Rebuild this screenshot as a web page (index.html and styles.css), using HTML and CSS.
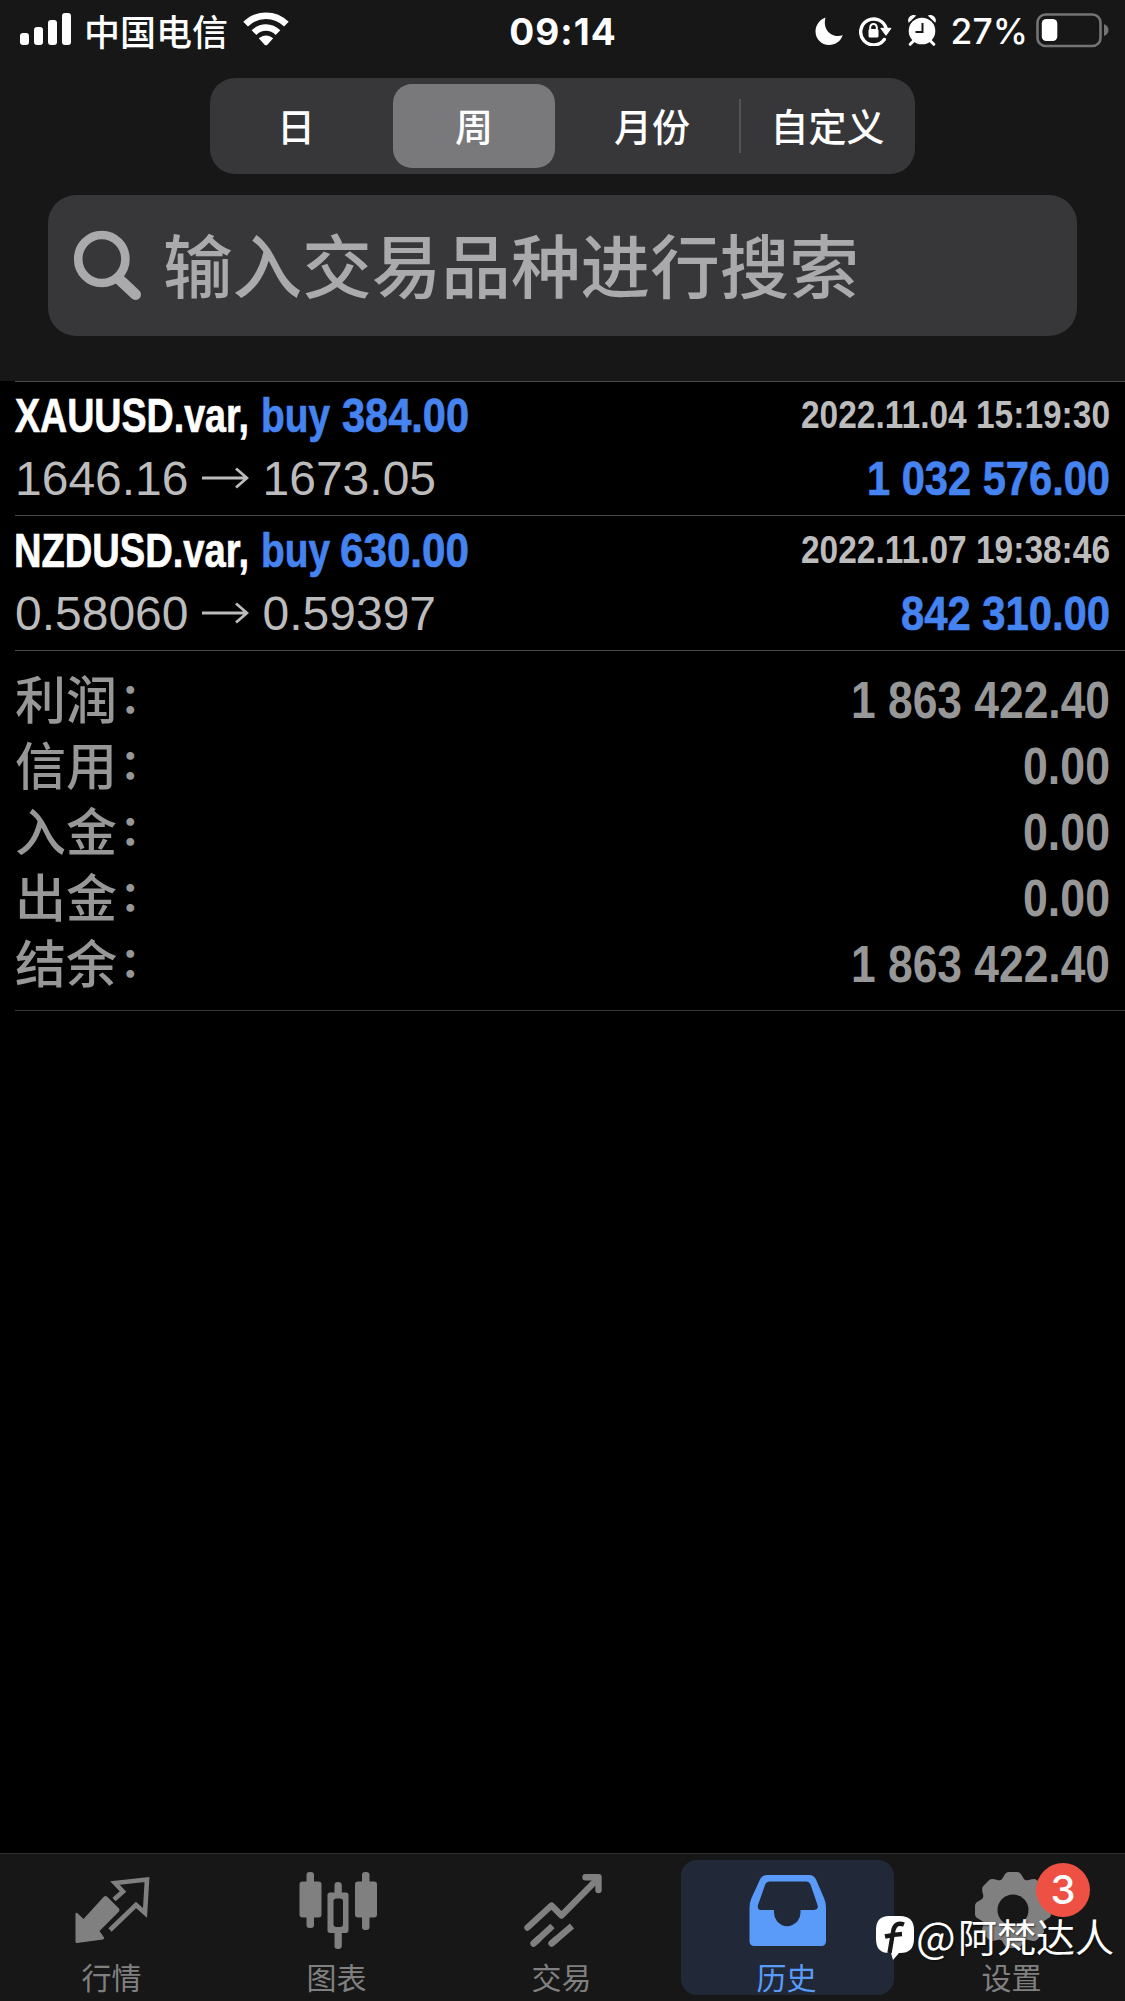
FILE: index.html
```html
<!DOCTYPE html>
<html lang="zh-CN">
<head>
<meta charset="utf-8">
<title>历史</title>
<link rel="stylesheet" href="styles.css">
</head>
<body>
<header class="top">
  <div class="status">
    <div class="status-left">
      <svg class="signal" width="52" height="33" viewBox="0 0 52 33" fill="#fff"><rect x="0" y="20" width="9" height="12" rx="3"/><rect x="14" y="14" width="9" height="18" rx="3"/><rect x="28" y="7" width="9" height="25" rx="3"/><rect x="42" y="0" width="9" height="32" rx="3"/></svg>
      <span class="carrier">中国电信</span>
      <svg class="wifi" width="46" height="34" viewBox="0 0 46 34"><g fill="none" stroke="#fff" stroke-width="6.6"><path d="M2.6 12.2C14 .9 32 .9 43.4 12.2"/><path d="M11 20.6c6.900-6.800 17.100-6.800 24 0"/></g><path d="M15.800 26.300c4.200-3.900 10.200-3.900 14.400 0l-5.800 6.400q-1.400 1.300-2.800 0z" fill="#fff"/></svg>
    </div>
    <time class="clock">09:14</time>
    <div class="status-right">
      <svg class="moon" width="28" height="29" viewBox="0 0 28 29"><path d="M10.500.500C5 2.500.5 8 .5 14.500.5 22 6.500 28 14 28c6.500 0 11.800-4 13.700-9.800C18 21.500 7 14 10.500.5z" fill="#fff"/></svg>
      <svg class="lock" width="33" height="30" viewBox="0 0 33 30"><path d="M25.300 23.500A13 13 0 1 1 27.200 12.500" fill="none" stroke="#fff" stroke-width="3.400" stroke-linecap="round"/><path d="M21.800 12.300H32L27 19.300z" fill="#fff" stroke="#fff" stroke-linejoin="round"/><rect x="9.500" y="13" width="10" height="8.500" rx="1.500" fill="#fff"/><path d="M11.200 14v-2.500a3.300 3.600 0 0 1 6.600 0V14" fill="none" stroke="#fff" stroke-width="2"/></svg>
      <svg class="alarm" width="30" height="32" viewBox="0 0 30 32"><g fill="#fff"><circle cx="15" cy="17" r="13.300"/><path d="M1.700 8.800C-.5 4 4.500-.7 9.300 1.600zM28.300 8.800C30.500 4 25.500-.7 20.700 1.600z"/></g><path d="M6.500 27l-3.300 3.300M23.500 27l3.300 3.300" stroke="#fff" stroke-width="3" stroke-linecap="round"/><path d="M15.500 9v9H8.500" fill="none" stroke="#171717" stroke-width="2"/></svg>
      <span class="percent">27%</span>
      <svg class="battery" width="74" height="36" viewBox="0 0 74 36"><rect x="1.500" y="1.500" width="63" height="31.500" rx="8" fill="none" stroke="#747474" stroke-width="2.600"/><rect x="5.800" y="6" width="15.500" height="22" rx="4.500" fill="#fff"/><path d="M68 11v12q4.500-2 4.500-6T68 11z" fill="#747474"/></svg>
    </div>
  </div>
  <nav class="segments">
    <span class="segment">日</span>
    <span class="segment active">周</span>
    <span class="segment month">月份</span>
    <i class="rule"></i>
    <span class="segment wide">自定义</span>
  </nav>
  <div class="search">
    <svg width="70" height="72" viewBox="0 0 70 72" fill="none" stroke="#aaaaac"><ellipse cx="28.800" cy="29" rx="23.600" ry="24" stroke-width="8.600"/><path d="M46 49L62.500 64.500" stroke-width="11" stroke-linecap="round"/></svg>
    <span>输入交易品种进行搜索</span>
  </div>
</header>

<main class="history">
  <article class="deal first">
    <div class="line">
      <svg class="narrow title" width="460" height="62"><text x="0" y="49" textLength="234" lengthAdjust="spacingAndGlyphs">XAUUSD.var,</text><text class="blue" x="246" y="49" textLength="69" lengthAdjust="spacingAndGlyphs">buy</text><text class="blue" x="327" y="49" textLength="127" lengthAdjust="spacingAndGlyphs">384.00</text></svg>
      <svg class="narrow date" width="311" height="62"><text x="1" y="45" textLength="309" lengthAdjust="spacingAndGlyphs">2022.11.04 15:19:30</text></svg>
    </div>
    <div class="line">
      <div class="prices"><span>1646.16</span><svg width="48" height="24" viewBox="0 0 48 24"><path d="M1 12H46M35 2.500L46 12 35 21.500"/></svg><span>1673.05</span></div>
      <svg class="narrow title blue" width="246" height="62"><text x="2" y="50" textLength="243" lengthAdjust="spacingAndGlyphs">1 032 576.00</text></svg>
    </div>
  </article>
  <article class="deal">
    <div class="line">
      <svg class="narrow title" width="460" height="62"><text x="-1" y="49" textLength="235" lengthAdjust="spacingAndGlyphs">NZDUSD.var,</text><text class="blue" x="246" y="49" textLength="69" lengthAdjust="spacingAndGlyphs">buy</text><text class="blue" x="325" y="49" textLength="129" lengthAdjust="spacingAndGlyphs">630.00</text></svg>
      <svg class="narrow date" width="311" height="62"><text x="1" y="45" textLength="309" lengthAdjust="spacingAndGlyphs">2022.11.07 19:38:46</text></svg>
    </div>
    <div class="line">
      <div class="prices"><span>0.58060</span><svg width="48" height="24" viewBox="0 0 48 24"><path d="M1 12H46M35 2.500L46 12 35 21.500"/></svg><span>0.59397</span></div>
      <svg class="narrow title blue" width="212" height="62"><text x="2" y="50" textLength="209" lengthAdjust="spacingAndGlyphs">842 310.00</text></svg>
    </div>
  </article>
  <section class="summary">
    <div class="total"><span class="label">利润<b>：</b></span><svg class="narrow" width="261" height="66"><text x="1" y="52" textLength="259" lengthAdjust="spacingAndGlyphs">1 863 422.40</text></svg></div>
    <div class="total"><span class="label">信用<b>：</b></span><svg class="narrow" width="89" height="66"><text x="1" y="52" textLength="87" lengthAdjust="spacingAndGlyphs">0.00</text></svg></div>
    <div class="total"><span class="label">入金<b>：</b></span><svg class="narrow" width="89" height="66"><text x="1" y="52" textLength="87" lengthAdjust="spacingAndGlyphs">0.00</text></svg></div>
    <div class="total"><span class="label">出金<b>：</b></span><svg class="narrow" width="89" height="66"><text x="1" y="52" textLength="87" lengthAdjust="spacingAndGlyphs">0.00</text></svg></div>
    <div class="total"><span class="label">结余<b>：</b></span><svg class="narrow" width="261" height="66"><text x="1" y="52" textLength="259" lengthAdjust="spacingAndGlyphs">1 863 422.40</text></svg></div>
  </section>
</main>

<nav class="tabs">
  <div class="tab">
    <svg width="90" height="90" viewBox="2.500 0 90 90"><path d="M38.500 30.500q1.500-1 3 0l12 12q1 1.500 0 3L34 65l4.500 6.500q.5 1.500-1 2L11.500 77q-1.500 0-1.500-1.500V48q.3-2 2-.8L18 53z" fill="#808080"/><path d="M48.500 33.500L57.500 25.500 49.500 17 81.500 13.500 79.500 47 70.500 39 44.500 64" fill="none" stroke="#808080" stroke-width="4.600"/></svg>
    <span>行情</span>
  </div>
  <div class="tab">
    <svg width="90" height="90" viewBox="0 0 90 90" fill="#808080"><rect x="6.500" y="15.500" width="22" height="36" rx="3"/><rect x="13.500" y="6" width="7.500" height="56" rx="3"/><rect x="62" y="15.500" width="22" height="36" rx="3"/><rect x="69" y="6" width="7.500" height="58" rx="3"/><path d="M41.500 19q0-3 3.500-3t3.800 3v7.500H53q2.500 0 2.500 2.500v35q0 3-2.500 3h-4.200v13q0 3-3.800 3t-3.500-3V67H37q-2.500 0-2.500-3V29q0-2.500 2.500-2.500h4.500zM40.500 35v23q0 3 3 3h3.500q3 0 3-3V35q0-2.500-3-2.500h-3.500q-3 0-3 2.500z" fill-rule="evenodd"/></svg>
    <span>图表</span>
  </div>
  <div class="tab">
    <svg width="90" height="90" viewBox="0 0 90 90" fill="none" stroke="#808080" stroke-width="6.400" stroke-linecap="round" stroke-linejoin="round"><path d="M9.500 61.500L33.500 39.500 43.500 49.500 78 14.500"/><path d="M67.500 11.200H80.500V24"/><path d="M15.500 77.500L34.500 60M33.500 77.500L54 60" stroke-linecap="butt"/><path d="M15.500 77.500l5-4.500M33.500 77.500l5-4.200"/><path d="M71 9h11v11z" fill="#808080" stroke="none"/></svg>
    <span>交易</span>
  </div>
  <div class="tab current">
    <svg width="90" height="90" viewBox="0 0 90 90"><path d="M24 9H66q5 0 7 4.500L81 32q2 4.500 2 10V75q0 5-5 5H11.500q-5 0-5-5V42q0-5.500 2-10L17 13.500Q19 9 24 9zM27 15.500q-3.500 0-4.800 3L15 39q-1 5 3 5H31v2.500q0 5 3 8.800 4.500 5 10 5t10.500-5q3-3.800 3-8.800V44H71q5-.5 3.500-5L67.500 18.500q-1.300-3-4.500-3z" fill="#5a9bfa" fill-rule="evenodd"/></svg>
    <span>历史</span>
  </div>
  <div class="tab">
    <svg width="90" height="90" viewBox="0 0 90 90"><defs><mask id="hub"><rect width="90" height="90" fill="#fff"/><circle cx="45" cy="44" r="15.500"/></mask></defs><g mask="url(#hub)" fill="#808080"><circle cx="45" cy="44" r="32.500"/><g id="teeth"><path id="tooth" d="M31 18L36.500 9Q38 6 41 6H49Q52 6 53.500 9L59 18z"/><use href="#tooth" transform="rotate(45 45 44)"/><use href="#tooth" transform="rotate(90 45 44)"/><use href="#tooth" transform="rotate(135 45 44)"/></g><use href="#teeth" transform="rotate(180 45 44)"/></g></svg>
    <span>设置</span>
    <em class="badge">3</em>
  </div>
</nav>
<div class="credit">
  <svg width="40" height="46" viewBox="0 0 40 46"><path d="M14 1H25Q39 1 39 15v9q0 14-14 14h-1l-6 7-2-7H14Q1 38 1 24V15Q1 1 14 1z" fill="#fff"/><path d="M29 9.500q-8-3-10.500 5L14.500 38M10 21.500q9-2 17-2.500" fill="none" stroke="#171717" stroke-width="4.400"/></svg>
  <span class="at">@</span><span>阿梵达人</span>
</div>
</body>
</html>
```
FILE: styles.css
```css
* { box-sizing: border-box; }

body {
  margin: 0;
  width: 1125px;
  height: 2001px;
  display: flex;
  flex-direction: column;
  overflow: hidden;
  background: #000;
  color: #fff;
  font-family: Inter, "Noto Sans CJK SC", sans-serif;
}

svg { display: block; flex: none; }

.top {
  height: 381px;
  background: #171717;
}

.status {
  height: 62px;
  display: grid;
  grid-template-columns: 1fr auto 1fr;
  align-items: center;
  padding: 0 15px 0 20px;
}

.status-left,
.status-right {
  display: flex;
  align-items: center;
}

.status-right { justify-content: flex-end; }

.signal { margin-bottom: 3px; }

.carrier {
  margin: 0 0 2px 12px;
  font-size: 36px;
  line-height: 52px;
  font-weight: 500;
  font-family: "Noto Sans CJK SC", sans-serif;
}

.wifi { margin: 0 0 4px 15px; }

.clock {
  margin-right: 4px;
  font-size: 37px;
  font-weight: 700;
  letter-spacing: 1px;
}

.moon { margin-right: 16px; }
.lock { margin: 0 15px 0 0; }
.alarm { margin: 0 14px 3px 0; }

.percent {
  font-size: 35.5px;
  font-weight: 500;
}

.battery { margin-left: 8px; }

.segments {
  width: 705px;
  height: 96px;
  margin: 16px 0 0 210px;
  padding: 6px 0;
  display: flex;
  align-items: center;
  border-radius: 25px;
  background: #373739;
}

.segment {
  flex: none;
  width: 172px;
  height: 84px;
  margin-right: 11px;
  border-radius: 19px;
  text-align: center;
  font: 500 38px/82px "Noto Sans CJK SC", sans-serif;
}

.segment.active {
  width: 162px;
  background: #79797b;
}

.segment.month { margin-right: 1px; }

.segment.wide {
  width: 173px;
  margin-right: 0;
}

.rule {
  width: 2px;
  height: 54px;
  background: #535355;
}

.search {
  width: 1029px;
  height: 141px;
  margin: 21px 0 0 48px;
  padding-left: 25px;
  display: flex;
  align-items: center;
  border-radius: 28px;
  background: #373739;
  color: #aaaaac;
  font: 500 69.6px/135px "Noto Sans CJK SC", sans-serif;
}

.search svg { margin-right: 20px; }
.search span { height: 141px; }

.history { flex: 1; }

.deal,
.summary {
  margin-left: 15px;
  padding-right: 14px;
  border-top: 1px solid #4a4a4a;
}

.deal {
  height: 135px;
  padding-top: 2px;
}

.deal.first {
  height: 134px;
  padding-top: 1px;
}

.summary {
  height: 361px;
  padding-top: 15px;
  border-bottom: 1px solid #3a3a3a;
}

.line {
  height: 62px;
  display: flex;
  justify-content: space-between;
}

.narrow {
  overflow: visible;
  fill: #979797;
  font: 700 51px "Liberation Sans Narrow", "Liberation Sans", sans-serif;
}

.title {
  font-size: 48px;
  fill: #fff;
}

.title text {
  stroke: #fff;
  stroke-width: .7px;
}

.date {
  font-size: 38.500px;
  fill: #bcbcbc;
}

.blue { fill: #4584f0; }

.title text.blue,
.title.blue text { stroke: #4584f0; }

.prices {
  display: flex;
  align-items: center;
  padding-top: 6px;
  color: #bcbcbc;
  font: 48px/56px "Liberation Sans", sans-serif;
}

.prices svg {
  margin: 0 14px 3px 12px;
  fill: none;
  stroke: #bcbcbc;
  stroke-width: 2.800;
}

.total {
  height: 66px;
  display: flex;
  justify-content: space-between;
  color: #979797;
}

.label {
  height: 66px;
  font: 500 51px/62px "Noto Sans CJK SC", sans-serif;
}

.label b {
  margin-left: 3px;
  font: 700 41px/40px "Noto Sans CJK TC", sans-serif;
  vertical-align: 6px;
}

.tabs {
  height: 148px;
  display: flex;
  border-top: 1px solid #303030;
  background: #171717;
}

.tab {
  position: relative;
  flex: 1;
  display: flex;
  flex-direction: column;
  align-items: center;
  padding-top: 12px;
  color: #808080;
  font: 400 30px/41px "Noto Sans CJK SC", sans-serif;
}

.tab span { padding-right: 2px; }

.tab.current {
  flex: 0 0 213px;
  height: 135px;
  margin: 6px 6px 0;
  padding-top: 6px;
  border-radius: 16px;
  background: #212939;
  color: #5a9bfa;
}

.badge {
  position: absolute;
  left: 136px;
  top: 9px;
  width: 54px;
  height: 54px;
  border-radius: 50%;
  background: #ee5143;
  color: #fff;
  text-align: center;
  font: normal 500 40px/54px Inter, sans-serif;
}

.credit {
  position: absolute;
  left: 875px;
  top: 1906px;
  display: flex;
  align-items: center;
  font: 400 39px/58px "Noto Sans CJK SC", sans-serif;
  text-shadow: 1px 1px 2px rgba(0, 0, 0, .6);
}

.credit svg { margin-top: 6px; }

.credit .at {
  width: 42px;
  margin-left: 1px;
  font-size: 42px;
}
```
